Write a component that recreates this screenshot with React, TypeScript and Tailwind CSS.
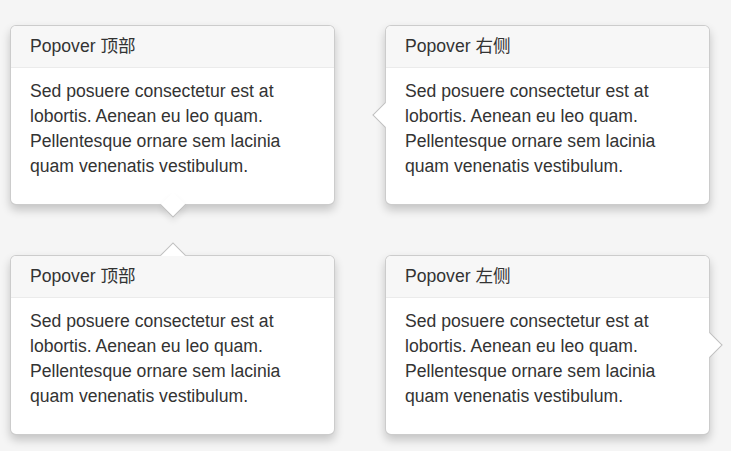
import React from "react";

type Side = "bottom" | "top" | "left" | "right";

function Arrow({ side }: { side: Side }) {
  const base =
    "absolute w-[18px] h-[18px] bg-white rotate-45 border-[rgba(0,0,0,0.25)] z-10";
  if (side === "bottom")
    return (
      <div className={`${base} left-1/2 -translate-x-1/2 top-full -translate-y-[8px] border-r border-b shadow-[3px_3px_6px_rgba(0,0,0,0.08)]`} />
    );
  if (side === "top")
    return <div className={`${base} left-1/2 -translate-x-1/2 bottom-full translate-y-[8px] border-l border-t`} />;
  if (side === "left")
    return <div className={`${base} top-1/2 -translate-y-1/2 right-full translate-x-[8px] border-l border-b`} />;
  return <div className={`${base} top-1/2 -translate-y-1/2 left-full -translate-x-[8px] border-t border-r`} />;
}

function Popover({ title, side }: { title: string; side: Side }) {
  return (
    <div className="relative flex flex-col h-[180px] bg-white border border-[rgba(0,0,0,0.2)] rounded-[6px] shadow-[0_5px_10px_rgba(0,0,0,0.2)]">
      <div className="relative z-20 h-[42px] flex items-center px-[19px] bg-[#f7f7f7] border-b border-[#ebebeb] rounded-t-[5px] text-[17.6px] text-[#333]">
        {title}
      </div>
      <div className="relative z-20 px-[19px] pt-[11px] text-[17.6px] leading-[25px] text-[#333]">
        Sed posuere consectetur est at lobortis. Aenean eu leo quam.
        Pellentesque ornare sem lacinia quam venenatis vestibulum.
      </div>
      <Arrow side={side} />
    </div>
  );
}

export default function App() {
  return (
    <div
      className="min-h-screen bg-[#f5f5f5] pl-[10px] pt-[25px]"
      style={{ fontFamily: '"Liberation Sans", Arial, "Noto Sans CJK SC", sans-serif' }}
    >
      <div className="grid grid-cols-[325px_325px] gap-[50px]">
        <Popover title="Popover 顶部" side="bottom" />
        <Popover title="Popover 右侧" side="left" />
        <Popover title="Popover 顶部" side="top" />
        <Popover title="Popover 左侧" side="right" />
      </div>
    </div>
  );
}
